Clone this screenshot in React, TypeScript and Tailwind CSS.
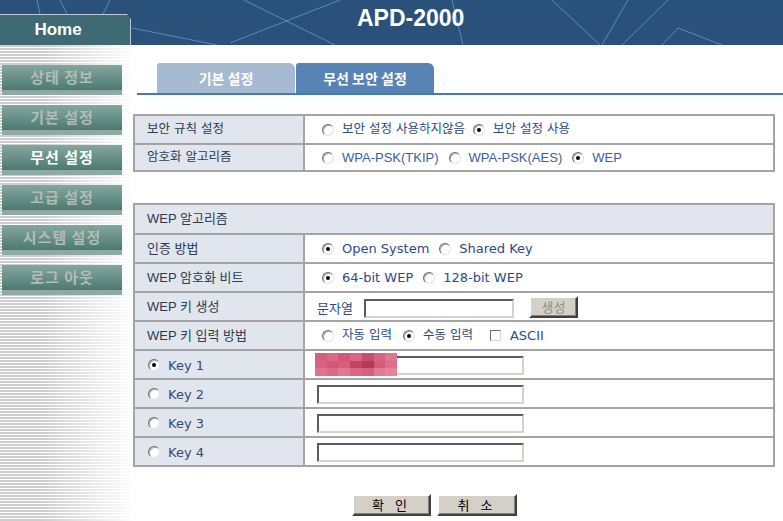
import React from "react";

const Radio = ({ checked }: { checked?: boolean }) => (
  <span className="inline-flex h-[12px] w-[12px] shrink-0 items-center justify-center rounded-full border border-t-[#6f6f6f] border-l-[#6f6f6f] border-r-[#e2e2e2] border-b-[#e2e2e2] bg-white shadow-[inset_1px_1px_0_#b0b0b0]">
    {checked && <span className="h-[4px] w-[4px] rounded-full bg-black" />}
  </span>
);

const Check = () => (
  <span className="inline-block h-[11px] w-[11px] shrink-0 border border-t-[#6f6f6f] border-l-[#6f6f6f] border-r-[#d8d8d8] border-b-[#d8d8d8] bg-white" />
);

const Input = ({ w }: { w: string }) => (
  <span className={`block h-[19px] ${w} border-2 border-t-[#5c5c5c] border-l-[#5c5c5c] border-r-[#d6d3cc] border-b-[#d6d3cc] bg-white`} />
);

const menu = [
  { label: "상태 정보" },
  { label: "기본 설정" },
  { label: "무선 설정", active: true },
  { label: "고급 설정" },
  { label: "시스템 설정" },
  { label: "로그 아웃" },
];

// pixelated redaction over key 1
const mosaic = [
  "#d65d7b", "#dc6a86", "#d45776", "#db6682", "#c94d6d", "#d9637f", "#e07590",
  "#d86280", "#d1577a", "#d65f7d", "#c44365", "#b8385a", "#d45b7a", "#de6f8a",
  "#df7390", "#dc6a87", "#e07893", "#da6783", "#d6607e", "#e27c96", "#e58299",
];

const Row = ({ label, children, keyRow }: { label: React.ReactNode; children?: React.ReactNode; keyRow?: boolean }) => (
  <div className="flex h-[27px] border-t-2 border-[#a4a4a4] first:border-t-0">
    <div className={`flex w-[170px] shrink-0 items-center border-r-2 border-[#a4a4a4] bg-[#e1e6ee] ${keyRow ? "pl-[13px]" : "pl-[12px]"} text-[#2f3a4c]`}>
      {label}
    </div>
    <div className="flex flex-1 items-center bg-white">{children}</div>
  </div>
);

const Opt = ({ checked, children, cls = "" }: { checked?: boolean; children: React.ReactNode; cls?: string }) => (
  <span className={`flex items-center gap-[8px] ${cls}`}>
    <Radio checked={checked} />
    <span>{children}</span>
  </span>
);

const Btn3d = ({ children, cls }: { children: React.ReactNode; cls: string }) => (
  <span className={`flex items-center justify-center border-2 border-t-white border-l-white border-r-[#404040] border-b-[#404040] bg-[#d4d0c8] shadow-[inset_-1px_-1px_0_#808080] ${cls}`}>
    {children}
  </span>
);

export default function App() {
  return (
    <div className="flex min-h-screen flex-col overflow-hidden bg-white font-['DejaVu_Sans','Noto_Sans_CJK_KR',sans-serif] text-[12.5px]">
      {/* Header */}
      <div className="relative flex h-[45px] bg-[#29517a]">
        <svg className="pointer-events-none absolute inset-0" width="783" height="45" viewBox="0 0 783 45">
          <g stroke="#6a98cc" strokeWidth="1" fill="none" opacity="0.8">
            <line x1="37" y1="0" x2="40" y2="14" />
            <line x1="60" y1="0" x2="67" y2="14" />
            <line x1="110" y1="0" x2="103" y2="14" />
            <polyline points="132,28 157,33 217,45" />
            <line x1="230" y1="43" x2="340" y2="0" />
            <line x1="244" y1="0" x2="335" y2="45" />
            <line x1="452" y1="0" x2="463" y2="45" />
            <line x1="552" y1="0" x2="600" y2="45" />
            <line x1="628" y1="0" x2="602" y2="45" />
            <line x1="668" y1="0" x2="622" y2="45" />
            <polyline points="662,45 678,28 722,45" />
          </g>
        </svg>
        <div className="relative z-10 flex h-[31px] w-[131px] items-center justify-center self-end border-t border-r border-[#b9cbd2] bg-[#3f6a73] [clip-path:polygon(0_0,calc(100%-4px)_0,100%_5px,100%_100%,0_100%)]">
          <span className="pr-[14px] font-['Liberation_Sans',sans-serif] text-[17px] font-bold text-white">Home</span>
        </div>
        <div className="relative z-10 ml-[226px] mt-[7px] self-start font-['Liberation_Sans',sans-serif] text-[23px] font-bold leading-none text-white">
          APD-2000
        </div>
      </div>

      <div className="flex flex-1">
        {/* Sidebar */}
        <div className="flex w-[131px] shrink-0 flex-col gap-[10px] pt-[20px] [background-image:linear-gradient(to_right,rgba(255,255,255,0)_30%,rgba(255,255,255,0.95)_100%),repeating-linear-gradient(to_bottom,#cdcdcd_0px,#cdcdcd_2px,#ffffff_2px,#ffffff_3px)]">
          {menu.map((m) => (
            <div key={m.label} className="ml-[2px] flex h-[30px] w-[120px] flex-col">
              <div className="flex h-[25px] items-center justify-center bg-[linear-gradient(to_bottom,#84a7a0,#4c7a71)]">
                <span className={`font-['Noto_Sans_CJK_KR',sans-serif] text-[15px] font-bold tracking-[1px] ${m.active ? "text-white" : "text-[#b3bcb8]"}`}>
                  {m.label}
                </span>
              </div>
              <div className="h-[5px] bg-[#8fa9a4]" />
            </div>
          ))}
        </div>

        {/* Main */}
        <div className="flex flex-1 flex-col">
          <div className="ml-[6px] mt-[18px] flex gap-[1px] border-b-2 border-[#4a79b0] pl-[20px]">
            <div className="flex h-[30px] w-[138px] items-center justify-center rounded-tl-[3px] rounded-tr-[6px] bg-[#a6bad2] font-['Noto_Sans_CJK_KR',sans-serif] text-[14px] font-bold text-white">
              기본 설정
            </div>
            <div className="flex h-[30px] w-[138px] items-center justify-center rounded-tl-[3px] rounded-tr-[6px] bg-[#5884b5] font-['Noto_Sans_CJK_KR',sans-serif] text-[14px] font-bold text-white">
              무선 보안 설정
            </div>
          </div>

          {/* Table 1 */}
          <div className="ml-[2px] mt-[19px] w-[642px] border-2 border-[#a4a4a4]">
            <Row label="보안 규칙 설정">
              <div className="flex items-center gap-[8px] pl-[17px] text-[#2c4b84]">
                <Opt>보안 설정 사용하지않음</Opt>
                <Opt checked>보안 설정 사용</Opt>
              </div>
            </Row>
            <Row label="암호화 알고리즘">
              <div className="flex items-center gap-[10px] pl-[17px] font-['Liberation_Sans','Noto_Sans_CJK_KR',sans-serif] text-[13px] text-[#3a5eab]">
                <Opt>WPA-PSK(TKIP)</Opt>
                <Opt>WPA-PSK(AES)</Opt>
                <Opt checked>WEP</Opt>
              </div>
            </Row>
          </div>

          {/* Table 2 */}
          <div className="ml-[2px] mt-[31px] w-[642px] border-2 border-[#a4a4a4]">
            <div className="flex h-[28px] items-center bg-[#e1e6ee] pl-[12px] font-['Liberation_Sans','Noto_Sans_CJK_KR',sans-serif] text-[13px] text-[#2f3a4c]">
              WEP 알고리즘
            </div>
            <div className="border-t-2 border-[#a4a4a4]">
              <Row label={<span className="font-['Liberation_Sans','Noto_Sans_CJK_KR',sans-serif] text-[13px]">인증 방법</span>}>
                <div className="flex items-center gap-[10px] pl-[17px] text-[13px] text-[#2c4b84]">
                  <Opt checked>Open System</Opt>
                  <Opt>Shared Key</Opt>
                </div>
              </Row>
            </div>
            <div className="border-t-2 border-[#a4a4a4]">
              <Row label={<span className="font-['Liberation_Sans','Noto_Sans_CJK_KR',sans-serif] text-[13px]">WEP 암호화 비트</span>}>
                <div className="flex items-center gap-[10px] pl-[17px] text-[13px] text-[#2c4b84]">
                  <Opt checked>64-bit WEP</Opt>
                  <Opt>128-bit WEP</Opt>
                </div>
              </Row>
            </div>
            <div className="border-t-2 border-[#a4a4a4]">
              <Row label={<span className="font-['Liberation_Sans','Noto_Sans_CJK_KR',sans-serif] text-[13px]">WEP 키 생성</span>}>
                <div className="flex items-center pl-[12px] text-[#2c4b84]">
                  <span className="mt-[4px] text-[13px]">문자열</span>
                  <span className="ml-[11px] mt-[4px]"><Input w="w-[150px]" /></span>
                  <span className="ml-[15px]">
                    <Btn3d cls="h-[22px] w-[49px] font-['Noto_Sans_CJK_KR',sans-serif] text-[13px] text-[#8c8c8c]">생성</Btn3d>
                  </span>
                </div>
              </Row>
            </div>
            <div className="border-t-2 border-[#a4a4a4]">
              <Row label={<span className="font-['Liberation_Sans','Noto_Sans_CJK_KR',sans-serif] text-[13px]">WEP 키 입력 방법</span>}>
                <div className="flex items-center gap-[11px] pl-[17px] text-[#2c4b84]">
                  <Opt>자동 입력</Opt>
                  <Opt checked>수동 입력</Opt>
                  <span className="ml-[6px] flex items-center gap-[9px]">
                    <Check />
                    <span className="text-[13px]">ASCII</span>
                  </span>
                </div>
              </Row>
            </div>
            {[1, 2, 3, 4].map((k) => (
              <div key={k} className="border-t-2 border-[#a4a4a4]">
                <Row
                  keyRow
                  label={
                    <span className="flex items-center gap-[8px] text-[13px] text-[#34497a]">
                      <Radio checked={k === 1} />
                      <span className="mt-[3px]">Key {k}</span>
                    </span>
                  }
                >
                  <div className="relative mt-[2px] pl-[12px]">
                    <Input w="w-[207px]" />
                    {k === 1 && (
                      <div className="absolute left-[10px] top-[-3px] grid h-[23px] w-[82px] grid-cols-7 grid-rows-3">
                        {mosaic.map((c, i) => (
                          <span key={i} className="block" style={{ backgroundColor: c }} />
                        ))}
                      </div>
                    )}
                  </div>
                </Row>
              </div>
            ))}
          </div>

          {/* Buttons */}
          <div className="ml-[221px] mt-[27px] flex gap-[6px] font-['Noto_Sans_CJK_KR',sans-serif] text-[13px] text-black">
            <Btn3d cls="h-[22px] w-[79px] tracking-[4px]">확 인</Btn3d>
            <Btn3d cls="h-[22px] w-[80px] tracking-[4px]">취 소</Btn3d>
          </div>
        </div>
      </div>
    </div>
  );
}
